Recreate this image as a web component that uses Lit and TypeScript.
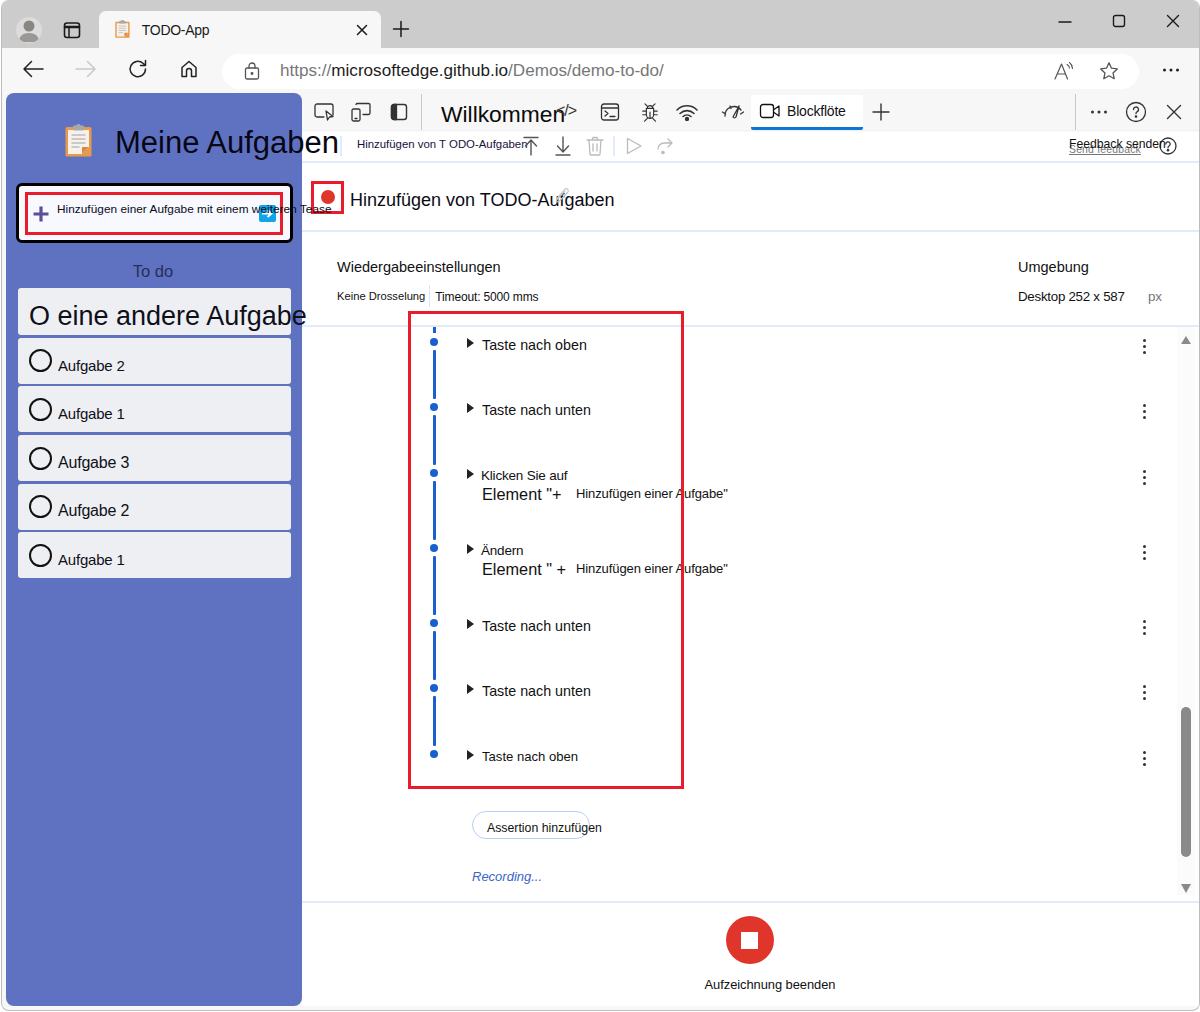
import { LitElement, html, css, svg } from "lit";
import { customElement } from "lit/decorators.js";

const ic = (w: number, h: number, body: unknown, cls = "") =>
  html`<svg class=${cls} width=${w} height=${h} viewBox="0 0 ${w} ${h}" fill="none" stroke="currentColor" stroke-width="1.3" stroke-linecap="round" stroke-linejoin="round">${body}</svg>`;

const clipboard = (s: number) => html`<svg class="clip" width=${s * 27} height=${s * 33} viewBox="0 0 27 33">
  <rect x="0.5" y="3" width="26" height="29.5" rx="1.5" fill="#e8994a"/>
  <path d="M3 6h21v17l-7 7H3z" fill="#f6f1ea"/>
  <path d="M24 23l-7 7v-7z" fill="#d98a3e"/>
  <rect x="8" y="1.5" width="11" height="5" rx="1" fill="#a9a9a9"/><rect x="11.5" y="0" width="4" height="3" rx="1.5" fill="#a9a9a9"/>
  <path d="M6.500 11h14M6.500 15h14M6.500 19h14M6.500 23h8" stroke="#bdbdbd" stroke-width="1.500"/></svg>`;

interface Step { label: string; h: number; el?: string; small?: boolean; }
const steps: Step[] = [
  { label: "Taste nach oben", h: 65 },
  { label: "Taste nach unten", h: 66 },
  { label: "Klicken Sie auf", el: 'Element "+', h: 75 },
  { label: "Ändern", el: 'Element " +', h: 75 },
  { label: "Taste nach unten", h: 65 },
  { label: "Taste nach unten", h: 66 },
  { label: "Taste nach oben", h: 61, small: true },
];
const tasks = [
  { t: "Aufgabe 2", s: true },
  { t: "Aufgabe 1", s: true },
  { t: "Aufgabe 3", s: false },
  { t: "Aufgabe 2", s: false },
  { t: "Aufgabe 1", s: true },
];

@customElement("app-root")
export class AppRoot extends LitElement {
  static styles = css`
    :host { display: block; width: 1200px; height: 1012px; background: #fff; font-family: "Liberation Sans", Arial, sans-serif; color: #111; overflow: hidden; }
    * { box-sizing: border-box; }
    .clip { flex: none; }
    .window { width: 1199px; height: 1011px; margin-left: 1px; border: 1px solid #bdbdbd; border-top: 0; border-radius: 8px; background: #f7f7f7; overflow: hidden; display: flex; flex-direction: column; }
    .titlebar { height: 48px; flex: none; background: #cccccc; display: flex; align-items: flex-end; color: #1a1a1a; }
    .avatar { width: 26px; height: 26px; border-radius: 50%; background: #dcdcdc; margin: 0 0 5px 14px; display: flex; align-items: center; justify-content: center; overflow: hidden; }
    .tabs-ic { margin: 0 0 9px 21px; display: block; }
    .tab { width: 282px; height: 37px; margin-left: 18px; background: #f7f7f7; border-radius: 7px 7px 0 0; display: flex; align-items: center; padding: 0 13px 0 16px; font-size: 14px; }
    .tab .name { margin-left: 12px; flex: 1; letter-spacing: -0.3px; }
    .plus-top { margin: 0 0 10px 11px; display: block; }
    .spacer { flex: 1; }
    .winbtns { display: flex; align-self: flex-start; align-items: center; gap: 40px; margin: 14px 19px 0 0; }
    .toolbar { height: 46px; flex: none; display: flex; align-items: center; color: #222; }
    .toolbar .nav { display: flex; align-items: center; }
    .addr { width: 917px; height: 35px; margin: 0 0 0 23px; background: #fff; border-radius: 18px; display: flex; align-items: center; padding: 0 20px 0 22px; font-size: 16.5px; color: #777; }
    .addr .u { margin-left: 20px; flex: 1; white-space: nowrap; font-size: 17.1px; }
    .addr b { font-weight: 400; color: #1c1c1c; }
    .addr svg { color: #555; }
    .main { flex: 1; min-height: 0; display: flex; padding: 0 0 4px 4px; margin-top: -1px; }
    .side { width: 296px; flex: none; background: #5f72c2; border-radius: 8px; position: relative; z-index: 2; padding: 31px 0 0 10px; display: flex; flex-direction: column; }
    .head { display: flex; align-items: center; height: 33px; padding-left: 49px; white-space: nowrap; font-size: 31px; color: #070714; gap: 23px; }
    .head span { margin-top: 5px; }
    .add { width: 277px; height: 60px; margin-top: 26px; border: 3px solid #000; border-radius: 6px; background: #f8f8ff; padding: 6px; flex: none; }
    .add-in { position: relative; height: 43px; border: 3px solid #e81c2a; margin: 0 1px 0 0; display: flex; align-items: center; }
    .add-in .p { color: #5d4f96; margin: 1px 0 0 4px; }
    .add-in .t { position: absolute; left: 29px; top: 7px; font-size: 11.8px; white-space: nowrap; color: #0a0a1a; letter-spacing: 0.04px; z-index: 1; }
    .add-in .go { position: absolute; right: 4px; top: 10px; width: 17px; height: 17px; background: #0ea5e9; border-radius: 2px; display: flex; align-items: center; justify-content: center; }
    .todo { text-align: center; font-size: 16.5px; color: #262f55; margin: 18px 0 0 -12px; height: 27px; line-height: 20px; padding-top: 0; }
    .list { display: flex; flex-direction: column; gap: 2.7px; padding-left: 2px; }
    .task { width: 273px; height: 46px; border-radius: 3px; background: #eeeff3; display: flex; align-items: center; white-space: nowrap; font-size: 16px; padding-left: 11px; color: #0f0f1a; flex: none; }
    .task.big { font-size: 27px; padding-top: 9px; height: 47px; }
    .task .c { width: 23px; height: 23px; border: 2.5px solid #111; border-radius: 50%; flex: none; margin: 0 6px 0 0; }
    .task .l { margin-top: 9px; letter-spacing: -0.2px; }
    .task .l.s { font-size: 15px; }
    .dev { flex: 1; min-width: 0; background: #fff; display: flex; flex-direction: column; position: relative; margin-top: 1px; }
    .tabbar { height: 36px; flex: none; background: #f7f7f7; display: flex; align-items: center; box-shadow: 0 1px 2px rgba(0,0,0,.08); position: relative; color: #333; }
    .tabbar .g { display: flex; align-items: center; justify-content: center; flex: none; }
    .vsep { width: 1px; height: 36px; background: #c9c9c9; flex: none; }
    .wk { font-size: 22.8px; margin-left: 19px; color: #0a0a0a; white-space: nowrap; width: 124px; margin-top: 4px; flex: none; }
    .code { font-size: 16px; margin-left: -9px; width: 24px; white-space: nowrap; flex: none; color: #333; letter-spacing: -1px; margin-top: -3px; }
    .active { width: 112px; height: 35px; background: #fff; border-bottom: 3px solid #0b76d6; border-radius: 2px; display: flex; align-items: center; padding-left: 8px; font-size: 14px; gap: 6px; flex: none; color: #111; letter-spacing: -.2px; }
    .sub { height: 33px; flex: none; border-bottom: 2px solid #e1ebfb; display: flex; align-items: center; position: relative; font-size: 12px; color: #555; white-space: nowrap; }
    .sub .bar { width: 2px; height: 20px; background: #e1ebfb; flex: none; }
    .sub .rec { color: #17113a; font-size: 11.4px; margin: -4px 0 0 15px; width: 166px; flex: none; }
    .fb { position: relative; width: 93px; height: 20px; color: #111; font-size: 12.2px; flex: none; margin-left: 395px; }
    .fb .a { position: absolute; left: 0; top: 1px; z-index: 1; }
    .fb .b { position: absolute; left: 0; top: 8px; font-size: 10.4px; color: #777; text-decoration: underline; letter-spacing: .2px; }
    .rectitle { height: 69px; flex: none; border-bottom: 2px solid #e1ebfb; display: flex; align-items: center; padding-left: 9px; position: relative; font-size: 18px; }
    .redbox { width: 33px; height: 33px; border: 3px solid #e81c2a; display: flex; align-items: center; justify-content: center; margin-top: 1px; flex: none; }
    .reddot { width: 14px; height: 14px; background: #e0352b; border-radius: 50%; }
    .rectitle .n { margin: 7px 0 0 6px; white-space: nowrap; color: #0b0b14; }
    .rectitle svg { margin: -4px 0 0 -62px; color: #c4c4c4; flex: none; position: relative; }
    .settings { height: 95px; flex: none; border-bottom: 2px solid #e1ebfb; padding: 27px 37px 0 35px; display: grid; grid-template-columns: 681px 1fr; grid-template-rows: 19px 30px; white-space: nowrap; font-size: 14.500px; }
    .settings .s2 { display: flex; align-items: center; font-size: 11.200px; padding-top: 5px; }
    .settings .s2 i { width: 1px; height: 22px; background: #dbe5f5; margin: 0 5px 0 4px; }
    .settings .s2 span + i + span { font-size: 12px; letter-spacing: -.15px; padding-top: 2px; }
    .env { display: flex; justify-content: space-between; align-items: center; padding-top: 7px; font-size: 13.300px; letter-spacing: -.25px; }
    .env em { font-style: normal; color: #777; letter-spacing: 0; }
    .body { height: 576px; flex: none; border-bottom: 2px solid #e1ebfb; display: flex; position: relative; }
    .flow { flex: 1; padding-left: 128px; }
    .stub { width: 3px; height: 6px; background: #1a5fd0; margin: 0 0 5px 3px; }
    .step { display: flex; position: relative; }
    .rail { width: 8px; flex: none; display: flex; flex-direction: column; align-items: center; }
    .dot { width: 8px; height: 8px; border-radius: 50%; background: #1a5fd0; flex: none; }
    .ln { flex: 1; width: 3px; margin: 4px 0; background: #1a5fd0; border-radius: 1px; }
    .cnt { margin-left: 29px; flex: 1; font-size: 14.300px; white-space: nowrap; display: flex; padding-top: 0; }
    .tri { width: 0; height: 0; border-left: 7px solid #222; border-top: 5px solid transparent; border-bottom: 5px solid transparent; flex: none; margin: 0 7px 0 0; }
    .lab { padding-top: 0; line-height: 14px; margin-top: 0; }
    .one { margin: 0 0 0 1px; }
    .one.small { font-size: 13.100px; }
    .two .k { margin-left: 0; font-size: 13.500px; letter-spacing: -.2px; }
    .two .e { display: flex; align-items: baseline; margin: 1px 0 0 1px; font-size: 16.300px; line-height: 20px; }
    .two .e span { width: 94px; flex: none; }
    .two .e small { font-size: 13px; letter-spacing: -.1px; position: relative; top: -2px; }
    .kebab { position: absolute; left: 713px; top: 0; display: flex; flex-direction: column; gap: 3px; padding-top: 1px; }
    .kebab i { width: 3px; height: 3px; border-radius: 50%; background: #333; }
    .assert { margin: 0 0 0 42px; width: 118px; height: 28px; border: 1.500px solid #b5cff7; border-radius: 14px; font-size: 12.300px; padding: 9px 0 0 14px; white-space: nowrap; }
    .recing { margin: 30px 0 0 42px; font-style: italic; font-size: 13px; color: #3a66c8; }
    .track { width: 18px; flex: none; height: 568px; margin-right: 4px; background: #fbfbfb; display: flex; flex-direction: column; align-items: center; padding-top: 9px; position: relative; }
    .up { width: 0; height: 0; border-left: 5.500px solid transparent; border-right: 5.500px solid transparent; border-bottom: 8px solid #8a8a8a; }
    .thumb { width: 10px; height: 150px; background: #8a8a8a; border-radius: 5px; margin-top: 363px; }
    .down { width: 0; height: 0; border-left: 5.500px solid transparent; border-right: 5.500px solid transparent; border-top: 9px solid #8a8a8a; margin-top: 27px; }
    .foot { flex: 1; display: flex; flex-direction: column; align-items: center; padding: 13px 0 0 0; position: relative; }
    .stop { width: 48px; height: 48px; border-radius: 50%; background: #e0352b; display: flex; align-items: center; justify-content: center; margin-right: 2px; }
    .stop i { width: 17px; height: 17px; background: #fff; }
    .stoplab { font-size: 12.900px; margin: 13px 0 0 39px; letter-spacing: -.05px; color: #111; }
    .redsteps { position: absolute; left: 106px; top: 217px; width: 276px; height: 478px; border: 3px solid #e81c2a; pointer-events: none; z-index: 1; }
  `;

  private renderStep(s: Step, i: number) {
    const last = i === steps.length - 1;
    return html`<div class="step" style="height:${s.h}px">
      <div class="rail"><div class="dot"></div>${last ? "" : html`<div class="ln"></div>`}</div>
      <div class="cnt"><div class="tri"></div>
        ${s.el
          ? html`<div class="lab two"><div class="k">${s.label}</div><div class="e"><span>${s.el}</span><small>Hinzufügen einer Aufgabe"</small></div></div>`
          : html`<div class="lab one ${s.small ? "small" : ""}">${s.label}</div>`}
      </div>
      <div class="kebab"><i></i><i></i><i></i></div>
    </div>`;
  }

  render() {
    return html`<div class="window">
      <div class="titlebar">
        <div class="avatar"><svg width="22" height="24" viewBox="0 0 22 24"><circle cx="11" cy="8" r="5.500" fill="#8a8783"/><path d="M1 24c0-6 4-9 10-9s10 3 10 9z" fill="#9a9794"/></svg></div>
        ${ic(18, 18, svg`<rect x="1.500" y="2" width="15" height="14.500" rx="2.500" stroke-width="1.600"/><path d="M2 6h14" stroke-width="2.400"/><path d="M6 6v10" stroke-width="1.500"/>`, "tabs-ic")}
        <div class="tab">${clipboard(0.55)}<span class="name">TODO-App</span>
          ${ic(12, 12, svg`<path d="M1.500 1.500l9 9M10.500 1.500l-9 9" stroke-width="1.500"/>`)}</div>
        ${ic(18, 18, svg`<path d="M9 1.500v15M1.500 9h15" stroke-width="1.500"/>`, "plus-top")}
        <div class="spacer"></div>
        <div class="winbtns">
          ${ic(14, 14, svg`<path d="M1 8h12" stroke-width="1.400"/>`)}
          ${ic(14, 14, svg`<rect x="1.500" y="1.500" width="11" height="11" rx="2" stroke-width="1.400"/>`)}
          ${ic(14, 14, svg`<path d="M1.500 1.500l11 11M12.500 1.500l-11 11" stroke-width="1.400"/>`)}
        </div>
      </div>
      <div class="toolbar">
        <div class="nav" style="margin:-4px 0 0 20px;gap:31px">
          ${ic(22, 18, svg`<path d="M2 9h19M9.500 1.500L2 9l7.500 7.500" stroke-width="1.500"/>`)}
          <span style="color:#c9c9c9;display:flex">${ic(22, 18, svg`<path d="M1 9h19M12.500 1.500L20 9l-7.500 7.500" stroke-width="1.500"/>`)}</span>
          ${ic(20, 20, svg`<path d="M17.500 10a7.700 7.700 0 1 1-2.500-5.700L17.500 6.500M17.500 1.500v5h-5" stroke-width="1.500"/>`)}
          ${ic(20, 20, svg`<path d="M3 8.500L10 2.500l7 6v9h-4.500v-5.500a2.500 2.500 0 0 0-5 0v5.500H3z" stroke-width="1.500"/>`)}
        </div>
        <div class="addr">
          ${ic(16, 18, svg`<rect x="1.500" y="6" width="13" height="11" rx="1.500"/><path d="M5 6V4a3 3 0 0 1 6 0v2"/><circle cx="8" cy="11.500" r=".8" fill="currentColor"/>`)}
          <span class="u">https://<b>microsoftedge.github.io</b>/Demos/demo-to-do/</span>
          ${ic(22, 20, svg`<path d="M1 18L7.500 3 13.500 18M3.500 13h8" stroke-width="1.200"/><path d="M13 3.500a5 5 0 0 1 2.500 3.500M15.500 1.500a8 8 0 0 1 3 6" stroke-width="1.100"/>`)}
          <span style="width:23px;flex:none"></span>
          ${ic(20, 20, svg`<path d="M10 1.800l2.500 5.400 5.800.7-4.300 4 1.200 5.800L10 14.800l-5.200 2.900L6 11.900l-4.300-4 5.800-.7z" stroke-width="1.300"/>`)}
        </div>
        <span style="margin:-2px 0 0 23px;display:flex">${ic(18, 6, svg`<circle cx="2.500" cy="3" r="1.500" fill="currentColor" stroke="none"/><circle cx="9" cy="3" r="1.500" fill="currentColor" stroke="none"/><circle cx="15.500" cy="3" r="1.500" fill="currentColor" stroke="none"/>`)}</span>
      </div>
      <div class="main">
        <aside class="side">
          <div class="head">${clipboard(1)}<span>Meine Aufgaben</span></div>
          <div class="add"><div class="add-in">
            <span class="p" style="display:flex">${ic(18, 18, svg`<path d="M9 1.500v15M1.500 9h15" stroke-width="3.200" stroke-linecap="butt"/>`)}</span>
            <span class="t">Hinzufügen einer Aufgabe mit einem weiteren Tease</span>
            <span class="go"><svg width="13" height="11" viewBox="0 0 13 11"><path d="M1 5.500h8M6.500 2l4 3.500-4 3.500" fill="none" stroke="#fff" stroke-width="2"/></svg></span>
          </div></div>
          <div class="todo">To do</div>
          <div class="list">
            <div class="task big">O eine andere Aufgabe</div>
            ${tasks.map((t) => html`<div class="task"><span class="c"></span><span class="l ${t.s ? "s" : ""}">${t.t}</span></div>`)}
          </div>
        </aside>
        <section class="dev">
          <div class="tabbar">
            <span class="g" style="width:44px;margin-left:0">${ic(22, 20, svg`<path d="M11 15H4a2 2 0 0 1-2-2V4a2 2 0 0 1 2-2h14a2 2 0 0 1 2 2v9"/><path d="M13 9l1.500 9 2-3 3.500-.5z"/>`)}</span>
            <span class="g" style="width:30px;margin-left:0">${ic(22, 20, svg`<rect x="2" y="7" width="8" height="12" rx="1.500"/><path d="M6 2.500a1.500 1.500 0 0 1 1.500-1h11A1.500 1.500 0 0 1 20 3v8a1.500 1.500 0 0 1-1.500 1.500H13M5 16.500h2"/>`)}</span>
            <span class="g" style="width:45px">${ic(18, 18, svg`<rect x="1.500" y="1.500" width="15" height="15" rx="2.500" stroke-width="1.400"/><path d="M1.500 4a2.500 2.500 0 0 1 2.500-2.500h2.500v15H4A2.500 2.500 0 0 1 1.500 14z" fill="currentColor"/>`)}</span>
            <div class="vsep"></div>
            <span class="wk">Willkommen</span><span class="code">&lt;/&gt;</span>
            <span class="g" style="width:60px;margin-left:0">${ic(20, 20, svg`<rect x="1.500" y="2" width="17" height="16" rx="2.500"/><path d="M2 6h16" stroke-width="1.600"/><path d="M5 9l3 2.500L5 14M10 14.500h5"/>`)}</span>
            <span class="g" style="width:20px;margin-left:0">${ic(22, 22, svg`<path d="M7 7h8v7a4 4 0 0 1-8 0zM8 7a3 3 0 0 1 6 0M7 10H3M15 10h4M7 14H3M15 14h4M8 18l-3 3M14 18l3 3M8 4.500L5.500 2M14 4.500L16.500 2M11 11v7"/>`)}</span>
            <span class="g" style="width:50px;margin-left:2px">${ic(24, 18, svg`<path d="M2 7a14 14 0 0 1 20 0M5 10.500a10 10 0 0 1 14 0M8 13.500a6 6 0 0 1 8 0" stroke-width="1.600"/><circle cx="12" cy="16" r="1.500" fill="currentColor"/>`)}</span>
            <span class="g" style="width:39px;padding-left:9px;justify-content:flex-start">${ic(24, 18, svg`<path d="M4 13a9 9 0 0 1 16-6M1.500 9l3 2M22.500 9l-3 2M9 3l1 2.500M15 14l3-11-6 11a1.800 1.800 0 0 0 3 0z"/>`)}</span>
            <div class="active">${ic(22, 18, svg`<rect x="1.500" y="2.500" width="13" height="13" rx="2.500" stroke-width="1.300"/><path d="M15 7.500l5-3.500v10l-5-3.500" stroke-width="1.300"/>`)}<span>Blockflöte</span></div>
            <span class="g" style="width:36px">${ic(18, 18, svg`<path d="M9 1v16M1 9h16" stroke-width="1.400"/>`)}</span>
            <span style="width:176px;flex:none"></span>
            <div class="vsep"></div>
            <span class="g" style="width:46px">${ic(18, 6, svg`<circle cx="2.500" cy="3" r="1.500" fill="currentColor" stroke="none"/><circle cx="9" cy="3" r="1.500" fill="currentColor" stroke="none"/><circle cx="15.500" cy="3" r="1.500" fill="currentColor" stroke="none"/>`)}</span>
            <span class="g" style="width:28px">${ic(22, 22, svg`<circle cx="11" cy="11" r="9.500"/><path d="M8.500 8.500a2.500 2.500 0 1 1 3.500 2.300c-.7.400-1 .8-1 1.700"/><circle cx="11" cy="15.500" r=".7" fill="currentColor"/>`)}</span>
            <span class="g" style="width:48px">${ic(16, 16, svg`<path d="M1.500 1.500l13 13M14.500 1.500l-13 13" stroke-width="1.400"/>`)}</span>
          </div>
          <div class="sub">
            <span style="width:38px;flex:none"></span><span class="bar"></span>
            <span class="rec">Hinzufügen von T ODO-Aufgaben</span>
            <span class="g" style="display:flex;color:#555;margin-left:0">${ic(16, 20, svg`<path d="M1 1.500h14M8 19V4M2.500 10L8 4l5.500 6" stroke-width="1.400"/>`)}</span>
            <span style="display:flex;color:#555;margin-left:16px">${ic(16, 20, svg`<path d="M8 1v15M2.500 10L8 16l5.500-6M1 19h14" stroke-width="1.400"/>`)}</span>
            <span style="display:flex;color:#bbb;margin-left:15px">${ic(18, 20, svg`<path d="M1 4h16M6.500 4V2.500a1 1 0 0 1 1-1h3a1 1 0 0 1 1 1V4M3 4l1 14a1 1 0 0 0 1 1h8a1 1 0 0 0 1-1l1-14M7 8v7M11 8v7" stroke-width="1.300"/>`)}</span>
            <span class="bar" style="margin-left:9px"></span>
            <span style="display:flex;color:#bbb;margin-left:11px">${ic(16, 18, svg`<path d="M1.500 1.500L15 9 1.500 16.500z" stroke-width="1.300"/>`)}</span>
            <span style="display:flex;color:#bbb;margin-left:14px">${ic(18, 18, svg`<path d="M2 12a6 6 0 0 1 6-6h8M12 2l4 4-4 4" stroke-width="1.300"/><circle cx="7" cy="15.500" r="1.800" fill="currentColor" stroke="none"/>`)}</span>
            <div class="fb"><span class="b">Send feedback</span><span class="a">Feedback senden</span></div>
            <span style="display:flex;color:#333;margin-left:-3px">${ic(18, 18, svg`<circle cx="9" cy="9" r="8"/><path d="M6.800 7a2.200 2.200 0 1 1 3.200 2c-.7.400-1 .7-1 1.500"/><circle cx="9" cy="13.200" r=".7" fill="currentColor"/>`)}</span>
          </div>
          <div class="rectitle">
            <div class="redbox"><div class="reddot"></div></div>
            <span class="n">Hinzufügen von TODO-Aufgaben</span>
            ${ic(18, 18, svg`<path d="M4 12l8-9a2.200 2.200 0 0 1 3 3l-9 9.500a1.400 1.400 0 0 1-2-2l8-8.500" stroke-width="1.100"/>`)}
          </div>
          <div class="settings">
            <div>Wiedergabeeinstellungen</div><div>Umgebung</div>
            <div class="s2"><span>Keine Drosselung</span><i></i><span>Timeout: 5000 mms</span></div>
            <div class="env"><span>Desktop 252 x 587</span><em>px</em></div>
          </div>
          <div class="body">
            <div class="flow">
              <div class="stub"></div>
              ${steps.map((s, i) => this.renderStep(s, i))}
              <div class="assert">Assertion hinzufügen</div>
              <div class="recing">Recording...</div>
            </div>
            <div class="track"><div class="up"></div><div class="thumb"></div><div class="down"></div></div>
          </div>
          <div class="foot"><div class="stop"><i></i></div><div class="stoplab">Aufzeichnung beenden</div></div>
          <div class="redsteps"></div>
        </section>
      </div>
    </div>`;
  }
}
